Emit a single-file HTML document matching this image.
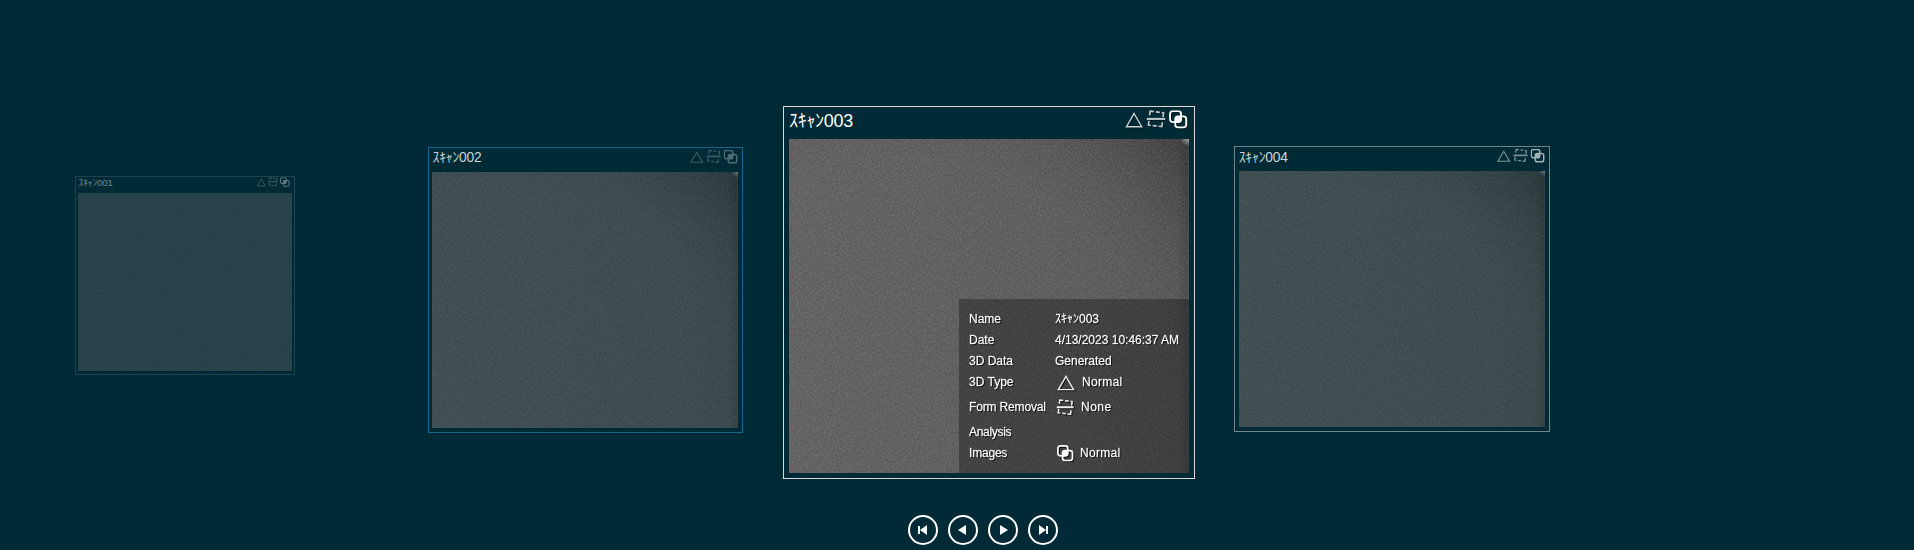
<!DOCTYPE html>
<html lang="ja">
<head>
<meta charset="utf-8">
<title>Scan carousel</title>
<style>
html,body{margin:0;padding:0;}
body{width:1914px;height:550px;background:#002b36;overflow:hidden;position:relative;
  font-family:"Liberation Sans","Noto Sans CJK JP",sans-serif;color:#fff;}
.card{position:absolute;box-sizing:border-box;border:1px solid #fff;}
.card .ttl{position:absolute;white-space:nowrap;line-height:1;}
.card .pic{position:absolute;overflow:hidden;background:#666;}
.card .pic svg.tex{position:absolute;left:0;top:0;width:100%;height:100%;display:block;}
.card .ics{position:absolute;}
/* card 3 (selected) */
#c3{left:783px;top:106px;width:412px;height:373px;border-color:#d6dadb;}
#c3 .ttl{left:5px;top:5px;font-size:18px;letter-spacing:-0.3px;}
#c3 .pic{left:5px;top:32px;width:400px;height:334px;}
#c3 .ics{left:340px;top:1px;width:66px;height:24px;}
#c3 .ics{filter:drop-shadow(1px 1px 0 rgba(0,0,0,.45));}
/* card 2 */
#c2{left:428px;top:147px;width:315px;height:286px;border-color:#14648c;}
#c2 .ttl{left:3.5px;top:2.5px;font-size:13.8px;letter-spacing:-0.25px;color:#cdd5d8;}
#c2 .pic{left:3px;top:24px;width:306px;height:256px;opacity:.66;}
#c2 .ics{left:260.2px;top:-0.2px;width:50.6px;height:18.4px;opacity:.3;}
/* card 4 */
#c4{left:1234px;top:146px;width:316px;height:286px;border-color:#6f858b;}
#c4 .ttl{left:3.7px;top:3.5px;font-size:13.8px;letter-spacing:-0.25px;color:#cdd5d8;}
#c4 .pic{left:4px;top:24px;width:306px;height:256px;opacity:.66;}
#c4 .ics{left:260.5px;top:-0.2px;width:50.6px;height:18.4px;opacity:.64;}
/* card 1 */
#c1{left:75px;top:176px;width:220px;height:199px;border-color:#1d444e;}
#c1 .ttl{left:2.5px;top:1.2px;font-size:9.6px;letter-spacing:-0.15px;color:#6f8990;}
#c1 .pic{left:2px;top:16px;width:214px;height:178px;opacity:.36;background:#6c6c6c;}
#c1 .ics{left:180.4px;top:-0.6px;width:35.1px;height:12.8px;opacity:.36;}
.nz{opacity:.06;}
#c1 .nz{opacity:.035;}
/* info */
.info{position:absolute;left:170px;top:160px;width:230px;height:174px;background:rgba(0,0,0,.3);
  font-size:12px;text-shadow:1px 1px 1px rgba(0,0,0,.9);will-change:transform;-webkit-text-stroke:.3px rgba(255,255,255,.55);}
.info span{position:absolute;white-space:nowrap;line-height:14px;}
.info svg{position:absolute;filter:drop-shadow(1px 1px 0.5px rgba(0,0,0,.8));}
.ctl{position:absolute;top:514px;width:32px;height:32px;}
</style>
</head>
<body>
<svg width="0" height="0" style="position:absolute">
  <defs>
    <filter id="nz" x="0" y="0" width="100%" height="100%" color-interpolation-filters="sRGB">
      <feTurbulence type="fractalNoise" baseFrequency="0.6 0.45" numOctaves="2" seed="7" result="n"/>
      <feColorMatrix type="matrix" values="2.4 0 0 0 -0.82  2.4 0 0 0 -0.82  2.4 0 0 0 -0.82  0 0 0 0 1"/>
    </filter>
    <linearGradient id="g1" x1="0" y1="0" x2="1" y2="0">
      <stop offset="0" stop-color="#646464"/>
      <stop offset="0.35" stop-color="#626262"/>
      <stop offset="0.75" stop-color="#5f5f5f"/>
      <stop offset="0.97" stop-color="#5b5b5b"/>
      <stop offset="1" stop-color="#4e4e4e"/>
    </linearGradient>
    <radialGradient id="g2" gradientUnits="userSpaceOnUse" cx="100" cy="334" r="449">
      <stop offset="0.70" stop-color="#000" stop-opacity="0"/>
      <stop offset="0.80" stop-color="#000" stop-opacity=".05"/>
      <stop offset="0.90" stop-color="#000" stop-opacity=".15"/>
      <stop offset="1" stop-color="#000" stop-opacity=".30"/>
    </radialGradient>
    <radialGradient id="g3" cx="1" cy="0" r="0.022">
      <stop offset="0" stop-color="#fff" stop-opacity=".6"/>
      <stop offset="1" stop-color="#fff" stop-opacity="0"/>
    </radialGradient>
    <symbol id="tex" viewBox="0 0 400 334" preserveAspectRatio="none">
      <rect width="400" height="334" fill="url(#g1)"/>
      <rect width="400" height="334" fill="url(#g2)"/>
      <rect width="400" height="334" fill="url(#g3)"/>
      <rect x="399" width="1" height="334" fill="#fff" opacity=".06"/>
    </symbol>
    <symbol id="itri" viewBox="0 0 20 20">
      <path d="M10 3.4 L17.6 16.6 H2.4 Z" fill="none" stroke="currentColor" stroke-width="1.4" stroke-linejoin="miter"/>
    </symbol>
    <symbol id="idash" viewBox="0 0 20 20">
      <g transform="rotate(7 10 10)"><path d="M3.25 7.3 V3 H7 M9 3 H13 M15 3 H16.75 V7.3 M3.25 12.7 V17 H5.6 M7.6 17 H11.6 M13.4 17 H16.75 V12.7" fill="none" stroke="currentColor" stroke-width="1.7"/></g>
      <path d="M0.8 10 H19.2" fill="none" stroke="currentColor" stroke-width="2.1"/>
    </symbol>
    <symbol id="iovl" viewBox="0 0 20 20">
      <rect x="1" y="1" width="11" height="11" rx="2.8" fill="none" stroke="currentColor" stroke-width="1.9"/>
      <rect x="6.2" y="6.2" width="11" height="11" rx="2.8" fill="none" stroke="currentColor" stroke-width="1.9"/>
      <rect x="6.2" y="6.2" width="5.8" height="5.8" rx="1.6" fill="currentColor"/>
    </symbol>
    <symbol id="ics" viewBox="0 0 66 24">
      <use href="#itri" x="0.1" y="2.1" width="20" height="20" color="#c9d1d3"/>
      <use href="#idash" x="22" y="0.9" width="20" height="20" color="#bcc7c9"/>
      <use href="#iovl" x="45.05" y="2.15" width="20" height="20" color="#fff"/>
    </symbol>
  </defs>
</svg>

<!-- card 1 -->
<div class="card" id="c1">
  <div class="ttl">ｽｷｬﾝ001</div>
  <svg class="ics" viewBox="0 0 66 24"><use href="#ics" width="66" height="24"/></svg>
  <div class="pic"><svg class="tex" preserveAspectRatio="none"><rect width="100%" height="100%" fill="#6e6e6e"/><rect class="nz" width="100%" height="100%" filter="url(#nz)"/></svg></div>
</div>

<!-- card 2 -->
<div class="card" id="c2">
  <div class="ttl">ｽｷｬﾝ002</div>
  <svg class="ics" viewBox="0 0 66 24"><use href="#ics" width="66" height="24"/></svg>
  <div class="pic"><svg class="tex" preserveAspectRatio="none"><use href="#tex" width="100%" height="100%"/><rect class="nz" width="100%" height="100%" filter="url(#nz)"/></svg></div>
</div>

<!-- card 4 -->
<div class="card" id="c4">
  <div class="ttl">ｽｷｬﾝ004</div>
  <svg class="ics" viewBox="0 0 66 24"><use href="#ics" width="66" height="24"/></svg>
  <div class="pic"><svg class="tex" preserveAspectRatio="none"><use href="#tex" width="100%" height="100%"/><rect class="nz" width="100%" height="100%" filter="url(#nz)"/></svg></div>
</div>

<!-- card 3 -->
<div class="card" id="c3">
  <div class="ttl">ｽｷｬﾝ003</div>
  <svg class="ics" viewBox="0 0 66 24"><use href="#ics" width="66" height="24"/></svg>
  <div class="pic">
    <svg class="tex" preserveAspectRatio="none"><use href="#tex" width="100%" height="100%"/><rect class="nz" width="100%" height="100%" filter="url(#nz)"/></svg>
    <div class="info">
      <span style="left:10px;top:13px">Name</span><span style="left:96px;top:13px">ｽｷｬﾝ003</span>
      <span style="left:10px;top:34px">Date</span><span style="left:96px;top:34px">4/13/2023 10:46:37 AM</span>
      <span style="left:10px;top:55px">3D Data</span><span style="left:96px;top:55px">Generated</span>
      <span style="left:10px;top:76px">3D Type</span><span style="left:123px;top:76px;letter-spacing:.3px">Normal</span>
      <span style="left:10px;top:101px;letter-spacing:-.15px">Form Removal</span><span style="left:122px;top:101px;letter-spacing:.5px">None</span>
      <span style="left:10px;top:126px;letter-spacing:-.3px">Analysis</span>
      <span style="left:10px;top:147px;letter-spacing:-.2px">Images</span><span style="left:121px;top:147px;letter-spacing:.3px">Normal</span>
      <svg style="left:96.9px;top:73.8px" width="20" height="20"><use href="#itri" width="20" height="20" color="#ececec"/></svg>
      <svg style="left:97.3px;top:99.2px" width="18.4" height="18.4" viewBox="0 0 20 20"><use href="#idash" width="20" height="20" color="#ececec"/></svg>
      <svg style="left:97.85px;top:146.25px" width="18" height="18" viewBox="0 0 20 20"><use href="#iovl" width="20" height="20" color="#fff"/></svg>
    </div>
  </div>
</div>

<!-- transport controls -->
<svg class="ctl" style="left:907px" viewBox="0 0 32 32"><circle cx="16" cy="16" r="14" fill="none" stroke="#fff" stroke-width="2"/><path d="M11 12 h2 v8 h-2z M20 11 v10 l-7 -5z" fill="#fff"/></svg>
<svg class="ctl" style="left:947px" viewBox="0 0 32 32"><circle cx="16" cy="16" r="14" fill="none" stroke="#fff" stroke-width="2"/><path d="M19 11 v10 l-8 -5z" fill="#fff"/></svg>
<svg class="ctl" style="left:987px" viewBox="0 0 32 32"><circle cx="16" cy="16" r="14" fill="none" stroke="#fff" stroke-width="2"/><path d="M13 11 v10 l8 -5z" fill="#fff"/></svg>
<svg class="ctl" style="left:1027px" viewBox="0 0 32 32"><circle cx="16" cy="16" r="14" fill="none" stroke="#fff" stroke-width="2"/><path d="M19 12 h2 v8 h-2z M12 11 v10 l7 -5z" fill="#fff"/></svg>
</body>
</html>
